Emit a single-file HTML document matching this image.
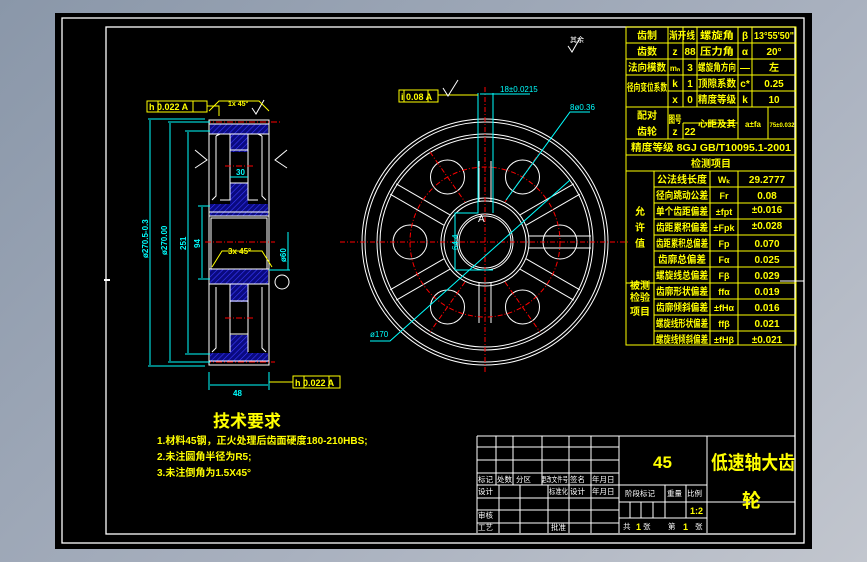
<!DOCTYPE html>
<html><head><meta charset="utf-8"><style>
html,body{margin:0;padding:0;}
body{width:867px;height:562px;overflow:hidden;background:linear-gradient(135deg,#8a97a9 0%,#a9b1bf 60%,#c2c6ce 100%);}
svg{position:absolute;left:0;top:0;}
text{font-family:"Liberation Sans","Noto Sans CJK SC",sans-serif;}
.y{fill:#ff0;font-weight:bold;}
.w{fill:#fff;}
.c{fill:#0ff;}
</style></head><body>
<svg width="867" height="562" viewBox="0 0 867 562">
<defs>
<pattern id="h" width="4" height="4" patternUnits="userSpaceOnUse" patternTransform="rotate(45)">
<rect width="4" height="4" fill="#0a0a80"/><line x1="0" y1="0" x2="0" y2="4" stroke="#3a3aff" stroke-width="1.2"/>
</pattern>
</defs>
<rect x="55" y="13" width="757" height="536" fill="#000"/>
<g fill="none" stroke="#fff" stroke-width="1.3">
<rect x="62" y="18" width="742" height="525"/>
<rect x="106" y="27" width="689" height="507"/>
</g>

<!-- ===== Left side view ===== -->
<g stroke="#fff" stroke-width="1" fill="none">
<rect x="209" y="120" width="60" height="245"/>
</g>
<rect x="210" y="124" width="58" height="10" fill="url(#h)"/>
<rect x="230" y="134" width="18" height="18" fill="url(#h)"/>
<rect x="210" y="204" width="58" height="12" fill="url(#h)"/>
<rect x="230" y="183" width="18" height="21" fill="url(#h)"/>
<rect x="210" y="269" width="58" height="15" fill="url(#h)"/>
<rect x="230" y="284" width="18" height="18" fill="url(#h)"/>
<rect x="210" y="353" width="58" height="9" fill="url(#h)"/>
<rect x="230" y="335" width="18" height="18" fill="url(#h)"/>
<g stroke="#fff" stroke-width="1" fill="none">
<line x1="209" y1="124" x2="269" y2="124"/><line x1="209" y1="134" x2="269" y2="134"/>
<path d="M216 136 L220 134 M216 136 V196 L212 200 M220 200 H230 V134"/>
<path d="M262 136 L258 134 M262 136 V196 L266 200 M258 200 H248 V134"/>
<line x1="230" y1="150" x2="248" y2="150"/><line x1="230" y1="183" x2="248" y2="183"/>
<line x1="209" y1="216" x2="269" y2="216"/><line x1="209" y1="212" x2="269" y2="212"/>
<rect x="211" y="218" width="56" height="51"/>
<line x1="209" y1="269" x2="269" y2="269"/><line x1="209" y1="284" x2="269" y2="284"/>
<path d="M216 287 V348 L212 352 M220 284 H230 V352"/>
<path d="M262 287 V348 L266 352 M258 284 H248 V352"/>
<line x1="230" y1="301" x2="248" y2="301"/><line x1="230" y1="334" x2="248" y2="334"/>
<line x1="209" y1="361" x2="269" y2="361"/>
<path d="M252 108 l4 6 l8 -14"/>
<path d="M195 150 l12 10 l-12 8 M287 150 l-12 10 l12 8"/>
<circle cx="282" cy="282" r="7"/>
</g>
<g stroke="#ff0" stroke-width="1" fill="none">
<path d="M209 111 l10 -10 h40 l10 10"/>
<path d="M212 267 l10 -16 h40 l10 16"/>
<rect x="147" y="101" width="60" height="11"/><line x1="158" y1="101" x2="158" y2="112"/><line x1="193" y1="101" x2="193" y2="112"/>
<path d="M207 106 h12 v10"/>
<rect x="293" y="376" width="47" height="12"/><line x1="304" y1="376" x2="304" y2="388"/><line x1="329" y1="376" x2="329" y2="388"/>
<line x1="269" y1="382" x2="293" y2="382"/>
</g>
<g class="y" font-size="9"><text x="149" y="110">h 0.022 A</text><text x="295" y="386">h 0.022 A</text><text x="228" y="254" font-size="8">3x 45°</text><text x="228" y="106" font-size="7">1x 45°</text></g>
<g stroke="#f00" stroke-width="1" stroke-dasharray="6 2 1 2">
<line x1="205" y1="122" x2="282" y2="122"/><line x1="205" y1="362" x2="275" y2="362"/>
<line x1="225" y1="166" x2="255" y2="166"/><line x1="205" y1="242" x2="275" y2="242"/><line x1="225" y1="318" x2="255" y2="318"/>
</g>
<g stroke="#0ff" stroke-width="1" fill="none">
<line x1="148" y1="119" x2="205" y2="119"/><line x1="148" y1="366" x2="205" y2="366"/>
<line x1="150" y1="120" x2="150" y2="365"/>
<line x1="168" y1="122" x2="210" y2="122"/><line x1="168" y1="362" x2="210" y2="362"/><line x1="170" y1="123" x2="170" y2="361"/>
<line x1="185" y1="131" x2="210" y2="131"/><line x1="185" y1="354" x2="210" y2="354"/><line x1="188" y1="132" x2="188" y2="353"/>
<line x1="198" y1="206" x2="210" y2="206"/><line x1="198" y1="279" x2="210" y2="279"/><line x1="202" y1="207" x2="202" y2="278"/>
<line x1="209" y1="372" x2="209" y2="390"/><line x1="269" y1="372" x2="269" y2="390"/><line x1="210" y1="385" x2="268" y2="385"/>
<line x1="269" y1="270" x2="290" y2="270"/><line x1="288" y1="232" x2="288" y2="270"/>
<line x1="230" y1="177" x2="248" y2="177"/>
</g>
<g class="c" font-size="8" font-weight="bold">
<text transform="translate(148,258) rotate(-90)">ø270.5-0.3</text>
<text transform="translate(167,255) rotate(-90)">ø270.00</text>
<text transform="translate(186,250) rotate(-90)">251</text>
<text transform="translate(200,248) rotate(-90)">94</text>
<text transform="translate(286,262) rotate(-90)">ø60</text>
<text x="236" y="175">30</text><text x="233" y="396">48</text>
</g>
<rect x="104" y="279" width="6" height="2" fill="#fff"/>

<!-- ===== Front view wheel ===== -->
<g transform="translate(485,242)">
<g fill="none" stroke="#fff" stroke-width="1">
<circle r="123"/><circle r="120"/><circle r="108"/><circle r="105"/>
<circle r="44"/><circle r="41"/><circle r="28"/><circle r="26"/>
<circle cx="75" r="17"/><circle cx="-75" r="17"/>
<circle cx="37.5" cy="65" r="17"/><circle cx="-37.5" cy="65" r="17"/>
<circle cx="37.5" cy="-65" r="17"/><circle cx="-37.5" cy="-65" r="17"/>
<g id="sp"><line x1="44" y1="-6" x2="106" y2="-6"/><line x1="44" y1="6" x2="106" y2="6"/></g>
<use href="#sp" transform="rotate(30)"/><use href="#sp" transform="rotate(150)"/>
<use href="#sp" transform="rotate(210)"/><use href="#sp" transform="rotate(330)"/>
</g>
<g stroke="#fff" fill="none">
<line x1="-6" y1="-81" x2="-6" y2="-40"/><line x1="6" y1="-81" x2="6" y2="-40"/>
<line x1="-6" y1="40" x2="-6" y2="81"/><line x1="6" y1="40" x2="6" y2="81"/>
</g>
<g fill="none" stroke="#f00" stroke-dasharray="5 2 1 2">
<circle r="75"/>
<line x1="-145" y1="0" x2="145" y2="0"/><line x1="0" y1="-155" x2="0" y2="130"/>
<line x1="-55" y1="-90" x2="-20" y2="-40"/><line x1="20" y1="40" x2="55" y2="90"/>
<line x1="-20" y1="40" x2="-55" y2="90"/><line x1="20" y1="-40" x2="55" y2="-90"/>
</g>
</g>
<g stroke="#0ff" stroke-width="1" fill="none">
<path d="M478 93 V213 H455 V270 H493 M493 93 V213"/>
<line x1="480" y1="94" x2="530" y2="94"/>
<path d="M370 341 H390 L570 180"/>
<path d="M506 200 L570 112 H590"/>
</g>
<g stroke="#ff0" fill="none"><rect x="399" y="90" width="39" height="12"/><line x1="404" y1="90" x2="404" y2="102"/><line x1="428" y1="90" x2="428" y2="102"/><line x1="438" y1="95" x2="478" y2="95"/></g>
<text x="401" y="100" class="y" font-size="9">i 0.08 A</text>
<path d="M443 88 l5 8 l10 -16" stroke="#fff" fill="none"/>
<path d="M568 46 l4 6 l8 -14" stroke="#fff" fill="none"/>
<text x="570" y="42" class="w" font-size="7">其余</text>
<g class="c" font-size="8"><text x="500" y="92">18±0.0215</text><text x="570" y="110">8ø0.36</text><text x="370" y="337">ø170</text><text transform="translate(458,250) rotate(-90)">64.4</text></g>
<text x="478" y="222" class="w" font-size="10">A</text>

<!-- ===== Parameter table ===== -->
<g stroke="#ff0" stroke-width="1" fill="none">
<rect x="626" y="27" width="170" height="318"/>
<path d="M626 43 H796 M626 59 H796 M626 75 H796 M668 91 H796 M626 107 H796 M683 123 H738 M626 139 H796 M626 155 H796 M626 171 H796 M654 187 H796 M654 203 H796 M654 219 H796 M654 235 H796 M654 251 H796 M654 267 H796 M626 283 H796 M654 299 H796 M654 315 H796 M654 331 H796"/>
<path d="M668 27 V139 M683 27 V107 M683 123 V139 M697 27 V107 M738 27 V139 M752 27 V107 M768 107 V139"/>
<path d="M654 171 V345 M710 171 V345 M738 171 V345"/>
</g>
<g class="y" font-size="10" text-anchor="middle" lengthAdjust="spacingAndGlyphs">
<text x="647" y="39">齿制</text><text x="682" y="39" textLength="26" lengthAdjust="spacingAndGlyphs">渐开线</text><text x="717" y="39" textLength="34" lengthAdjust="spacingAndGlyphs">螺旋角</text><text x="745" y="39">β</text><text x="774" y="39" textLength="40" lengthAdjust="spacingAndGlyphs">13°55'50"</text>
<text x="647" y="55">齿数</text><text x="675" y="55">z</text><text x="690" y="55">88</text><text x="717" y="55" textLength="34" lengthAdjust="spacingAndGlyphs">压力角</text><text x="745" y="55">α</text><text x="774" y="55">20°</text>
<text x="647" y="71" textLength="38" lengthAdjust="spacingAndGlyphs">法向模数</text><text x="675" y="71" font-size="8">mₙ</text><text x="690" y="71">3</text><text x="717" y="71" textLength="38" lengthAdjust="spacingAndGlyphs">螺旋角方向</text><text x="745" y="71">—</text><text x="774" y="71">左</text>
<text x="647" y="91" textLength="40" lengthAdjust="spacingAndGlyphs">径向变位系数</text><text x="675" y="87">k</text><text x="690" y="87">1</text><text x="717" y="87" textLength="38" lengthAdjust="spacingAndGlyphs">顶隙系数</text><text x="745" y="87">c*</text><text x="774" y="87">0.25</text>
<text x="675" y="103">x</text><text x="690" y="103">0</text><text x="717" y="103" textLength="38" lengthAdjust="spacingAndGlyphs">精度等级</text><text x="745" y="103">k</text><text x="774" y="103">10</text>
<text x="647" y="119">配对</text><text x="647" y="135">齿轮</text><text x="675" y="123" textLength="13" lengthAdjust="spacingAndGlyphs">图号</text><text x="675" y="135">z</text><text x="690" y="135">22</text>
<text x="717" y="127" font-size="9" textLength="38" lengthAdjust="spacingAndGlyphs">心距及其</text><text x="753" y="127" font-size="8">a±fa</text><text x="782" y="127" font-size="6" textLength="25" lengthAdjust="spacingAndGlyphs">75±0.032</text>
<text x="711" y="151" textLength="160" lengthAdjust="spacingAndGlyphs">精度等级 8GJ GB/T10095.1-2001</text>
<text x="711" y="167">检测项目</text>
<text x="640" y="215">允</text><text x="640" y="231">许</text><text x="640" y="247">值</text>
<text x="640" y="289">被测</text><text x="640" y="301">检验</text><text x="640" y="315">项目</text>
<g>
<text x="682" y="183" textLength="50" lengthAdjust="spacingAndGlyphs">公法线长度</text>
<text x="682" y="199" textLength="52" lengthAdjust="spacingAndGlyphs">径向跳动公差</text>
<text x="682" y="215" textLength="52" lengthAdjust="spacingAndGlyphs">单个齿距偏差</text>
<text x="682" y="231" textLength="52" lengthAdjust="spacingAndGlyphs">齿距累积偏差</text>
<text x="682" y="247" textLength="52" lengthAdjust="spacingAndGlyphs">齿距累积总偏差</text>
<text x="682" y="263" textLength="48" lengthAdjust="spacingAndGlyphs">齿廓总偏差</text>
<text x="682" y="279" textLength="52" lengthAdjust="spacingAndGlyphs">螺旋线总偏差</text>
<text x="682" y="295" textLength="52" lengthAdjust="spacingAndGlyphs">齿廓形状偏差</text>
<text x="682" y="311" textLength="52" lengthAdjust="spacingAndGlyphs">齿廓倾斜偏差</text>
<text x="682" y="327" textLength="52" lengthAdjust="spacingAndGlyphs">螺旋线形状偏差</text>
<text x="682" y="343" textLength="52" lengthAdjust="spacingAndGlyphs">螺旋线倾斜偏差</text>
</g>
<g font-size="9">
<text x="724" y="183">Wₖ</text><text x="724" y="199">Fr</text><text x="724" y="215">±fpt</text><text x="724" y="231">±Fpk</text><text x="724" y="247">Fp</text><text x="724" y="263">Fα</text><text x="724" y="279">Fβ</text><text x="724" y="295">ffα</text><text x="724" y="311">±fHα</text><text x="724" y="327">ffβ</text><text x="724" y="343">±fHβ</text>
</g>
<text x="767" y="183">29.2777</text><text x="767" y="199">0.08</text><text x="767" y="213">±0.016</text><text x="767" y="229">±0.028</text><text x="767" y="247">0.070</text><text x="767" y="263">0.025</text><text x="767" y="279">0.029</text><text x="767" y="295">0.019</text><text x="767" y="311">0.016</text><text x="767" y="327">0.021</text><text x="767" y="343">±0.021</text>
</g>
<line x1="780" y1="281" x2="804" y2="281" stroke="#fff"/>

<!-- ===== Tech requirements ===== -->
<text x="213" y="427" class="y" font-size="17" font-weight="normal">技术要求</text>
<g class="y" font-size="10"><text x="157" y="444">1.材料45钢，正火处理后齿面硬度180-210HBS;</text>
<text x="157" y="460">2.未注圆角半径为R5;</text><text x="157" y="476">3.未注倒角为1.5X45°</text></g>

<!-- ===== Title block ===== -->
<g stroke="#fff" stroke-width="1" fill="none">
<path d="M477 436 H795 M477 436 V533 M477 447 H619 M477 460 H619 M477 473 H619 M477 485 H707 M477 498 H619 M477 510 H619 M477 523 H619 M619 436 V533 M707 436 V533 M619 502 H795 M619 518 H707"/>
<path d="M496 436 V485 M513 436 V485 M542 436 V485 M569 436 V533 M591 436 V533"/>
<path d="M499 485 V533 M520 485 V533 M548 485 V533"/>
<path d="M665 485 V518 M686 485 V518 M630 502 V518 M641 502 V518 M653 502 V518"/>
</g>
<g class="w" font-size="7.5">
<text x="478" y="482">标记</text><text x="497" y="482">处数</text><text x="516" y="482">分区</text><text x="541" y="482" textLength="27" lengthAdjust="spacingAndGlyphs">更改文件号</text><text x="570" y="482">签名</text><text x="592" y="482">年月日</text>
<text x="478" y="494">设计</text><text x="549" y="494" textLength="19" lengthAdjust="spacingAndGlyphs">标准化</text><text x="570" y="494">设计</text><text x="592" y="494">年月日</text>
<text x="478" y="518">审核</text><text x="478" y="530">工艺</text><text x="551" y="530">批准</text>
<text x="625" y="496">阶段标记</text><text x="667" y="496">重量</text><text x="687" y="496">比例</text>
<text x="623" y="529">共</text><text x="643" y="529">张</text><text x="668" y="529">第</text><text x="695" y="529">张</text>
</g>
<g class="y" font-weight="normal"><text x="653" y="468" font-size="17">45</text><text x="690" y="514" font-size="9">1:2</text>
<text x="636" y="530" font-size="9">1</text><text x="683" y="530" font-size="9">1</text>
<text x="711" y="469" font-size="19" textLength="84" lengthAdjust="spacingAndGlyphs">低速轴大齿</text><text x="742" y="507" font-size="19">轮</text></g>
</svg>
</body></html>
